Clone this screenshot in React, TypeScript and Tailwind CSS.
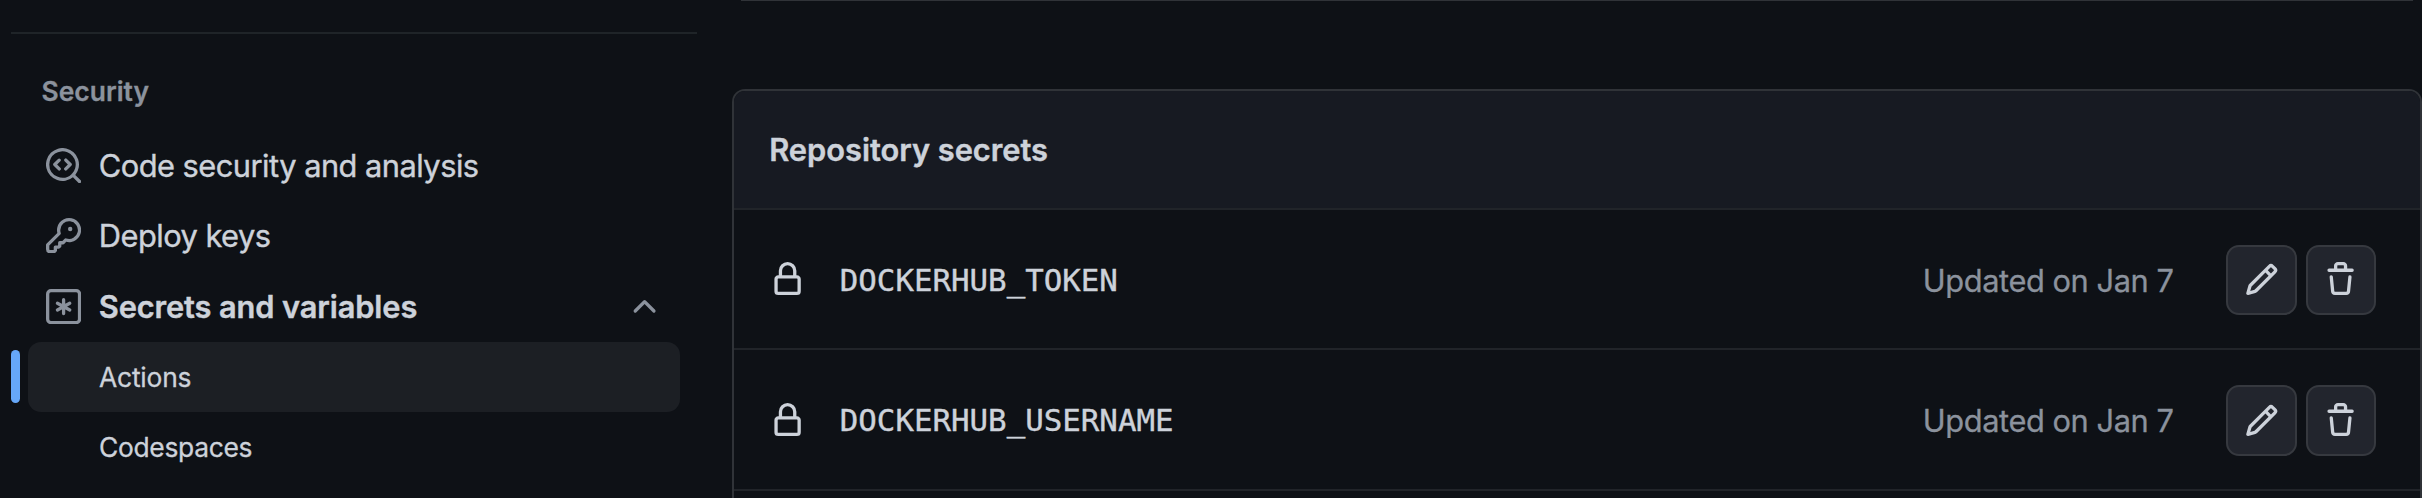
import type { ReactNode } from "react";

const PATHS = {
  codescan:
    "M8.47 4.97a.75.75 0 0 0 0 1.06L9.94 7.5 8.47 8.97a.75.75 0 1 0 1.06 1.06l2-2a.75.75 0 0 0 0-1.06l-2-2a.75.75 0 0 0-1.06 0ZM6.53 6.03a.75.75 0 0 0-1.06-1.06l-2 2a.75.75 0 0 0 0 1.06l2 2a.75.75 0 1 0 1.06-1.06L5.06 7.5l1.47-1.47ZM12.246 13.307a7.501 7.501 0 1 1 1.06-1.06l2.474 2.473a.749.749 0 1 1-1.06 1.06ZM1.5 7.5a6.002 6.002 0 0 0 3.608 5.504 6.002 6.002 0 0 0 6.486-1.117.748.748 0 0 1 .292-.293A6 6 0 1 0 1.5 7.5Z",
  key: "M10.5 0a5.499 5.499 0 1 1-1.288 10.848l-.932.932a.749.749 0 0 1-.53.22H7v.75a.749.749 0 0 1-.22.53l-.5.5a.749.749 0 0 1-.53.22H5v.75a.749.749 0 0 1-.22.53l-.5.5a.749.749 0 0 1-.53.22h-2A1.75 1.75 0 0 1 0 14.25v-2c0-.199.079-.389.22-.53l4.932-4.932A5.5 5.5 0 0 1 10.5 0Zm-4 5.5c-.001.431.069.86.205 1.269a.75.75 0 0 1-.181.768L1.5 12.56v1.69c0 .138.112.25.25.25h1.69l.06-.06v-1.19a.75.75 0 0 1 .75-.75h1.19l.06-.06v-1.19a.75.75 0 0 1 .75-.75h1.19l1.023-1.025a.75.75 0 0 1 .768-.18A4 4 0 1 0 6.5 5.5ZM11 6a1 1 0 1 1 0-2 1 1 0 0 1 0 2Z",
  lock: "M4 4a4 4 0 0 1 8 0v2h.25c.966 0 1.75.784 1.75 1.75v5.5A1.75 1.75 0 0 1 12.25 15h-8.5A1.75 1.75 0 0 1 2 13.25v-5.5C2 6.784 2.784 6 3.75 6H4Zm8.25 3.5h-8.5a.25.25 0 0 0-.25.25v5.5c0 .138.112.25.25.25h8.5a.25.25 0 0 0 .25-.25v-5.5a.25.25 0 0 0-.25-.25ZM10.5 6V4a2.5 2.5 0 1 0-5 0v2Z",
  chevronUp:
    "M3.22 10.53a.749.749 0 0 1 0-1.06l4.25-4.25a.749.749 0 0 1 1.06 0l4.25 4.25a.749.749 0 1 1-1.06 1.06L8 6.811 4.28 10.53a.749.749 0 0 1-1.06 0Z",
  pencil:
    "M11.013 1.427a1.75 1.75 0 0 1 2.474 0l1.086 1.086a1.75 1.75 0 0 1 0 2.474l-8.61 8.61c-.21.21-.47.364-.756.445l-3.251.93a.75.75 0 0 1-.927-.928l.929-3.25c.081-.286.235-.547.445-.758l8.61-8.61Zm.176 4.823L9.75 4.81l-6.286 6.287a.253.253 0 0 0-.064.108l-.558 1.953 1.953-.558a.253.253 0 0 0 .108-.064Zm1.238-3.763a.25.25 0 0 0-.354 0L10.811 3.75l1.439 1.44 1.263-1.263a.25.25 0 0 0 0-.354Z",
  trash:
    "M11 1.75V3h2.25a.75.75 0 0 1 0 1.5H2.75a.75.75 0 0 1 0-1.5H5V1.75C5 .784 5.784 0 6.75 0h2.5C10.216 0 11 .784 11 1.75ZM4.496 6.675l.66 6.6a.25.25 0 0 0 .249.225h5.19a.25.25 0 0 0 .249-.225l.66-6.6a.75.75 0 0 1 1.492.149l-.66 6.6A1.748 1.748 0 0 1 10.595 15h-5.19a1.75 1.75 0 0 1-1.741-1.575l-.66-6.6a.75.75 0 1 1 1.492-.15ZM6.5 1.75V3h3V1.75a.25.25 0 0 0-.25-.25h-2.5a.25.25 0 0 0-.25.25Z",
};

function Icon({ name }: { name: keyof typeof PATHS }) {
  return (
    <svg viewBox="0 0 16 16" fill="currentColor" aria-hidden="true" className="size-[35.2px] shrink-0">
      <path d={PATHS[name]} />
    </svg>
  );
}

function AsteriskIcon() {
  return (
    <svg viewBox="0 0 16 16" fill="none" stroke="currentColor" strokeWidth="1.5" strokeLinecap="round" aria-hidden="true" className="size-[35.2px] shrink-0">
      <rect x="0.75" y="0.75" width="14.5" height="14.5" rx="1.5" />
      <path d="M8 4.85v6.3M5.2 6.45l5.6 3.1M10.8 6.45l-5.6 3.1" />
    </svg>
  );
}

function NavItem({ icon, children, trailing }: { icon: ReactNode; children: ReactNode; trailing?: ReactNode }) {
  return (
    <a className="flex h-[70.4px] items-center pr-[17.6px] pl-[18px] text-[#8b929d]">
      {icon}
      <span className="ml-[17.6px] flex-1 pt-px whitespace-nowrap text-[#cdd2da]">{children}</span>
      {trailing}
    </a>
  );
}

function Sidebar() {
  return (
    <nav className="w-[697px] shrink-0 pt-8 pl-[11px]">
      <div className="h-0.5 bg-[#1f2428]" />
      <div className="mr-[17px] ml-[17px]">
        <h3 className="mt-[37px] mb-[19.3px] pl-[13.6px] text-[26.4px] leading-[40px] font-semibold text-[#8b929d] [-webkit-text-stroke:0.3px_currentColor]">
          Security
        </h3>
        <div className="text-[30.8px] [-webkit-text-stroke:0.4px_currentColor]">
          <NavItem icon={<Icon name="codescan" />}>
            <span className="tracking-[-0.52px]">Code security and analysis</span>
          </NavItem>
          <NavItem icon={<Icon name="key" />}>
            <span className="tracking-[-0.53px]">Deploy keys</span>
          </NavItem>
          <NavItem icon={<AsteriskIcon />} trailing={<Icon name="chevronUp" />}>
            <span className="font-semibold tracking-[-0.12px]">Secrets and variables</span>
          </NavItem>
        </div>
        <div className="mt-[0.5px] text-[26.4px] text-[#cdd2da] [-webkit-text-stroke:0.3px_currentColor]">
          <a className="relative flex h-[70px] items-center rounded-[13px] bg-[#1c1f24] pt-[2px] pl-[71px] tracking-[-0.2px]">
            <span className="absolute top-2 -left-[17px] h-[53px] w-[9px] rounded-full bg-[#66a7f8]" />
            Actions
          </a>
          <a className="flex h-[70px] items-center pt-[2px] pl-[71px] tracking-[-0.3px]">Codespaces</a>
        </div>
      </div>
    </nav>
  );
}

function IconButton({ name }: { name: "pencil" | "trash" }) {
  return (
    <button className="flex size-[70.4px] items-center justify-center rounded-[13px] border-2 border-[#36393f] bg-[#22252d] text-[#cdd2da]">
      <Icon name={name} />
    </button>
  );
}

function SecretRow({ name }: { name: string }) {
  return (
    <div className="flex h-[140.4px] items-center border-b-2 border-[#212429] pt-[1.5px] pr-[44px] pl-[36.2px] text-[#cdd2da]">
      <Icon name="lock" />
      <span className="ml-[34.4px] flex-1 font-['DejaVu_Sans_Mono',monospace] text-[30.8px] [-webkit-text-stroke:0.4px_currentColor]">
        {name}
      </span>
      <span className="mr-[52.6px] pt-[2px] text-[30.8px] tracking-[-0.43px] text-[#8b929d] [-webkit-text-stroke:0.3px_currentColor]">
        Updated on Jan 7
      </span>
      <div className="flex gap-[9px]">
        <IconButton name="pencil" />
        <IconButton name="trash" />
      </div>
    </div>
  );
}

export default function App() {
  return (
    <div className="flex h-[498px] w-[2422px] overflow-hidden bg-[#0e1116] font-['Inter',sans-serif]">
      <Sidebar />
      <main className="ml-[35px] flex-1">
        <div className="mx-[9px] h-px bg-[#303338]" />
        <section className="mt-[88px] h-[440px] overflow-hidden rounded-t-[13px] border-2 border-b-0 border-[#303338]">
          <header className="flex h-[119px] items-center border-b-2 border-[#212429] bg-[#171a22] pt-[2px] pl-[35.2px]">
            <h2 className="text-[30.8px] font-semibold tracking-[-0.02px] text-[#cdd2da] [-webkit-text-stroke:0.4px_currentColor]">
              Repository secrets
            </h2>
          </header>
          <SecretRow name="DOCKERHUB_TOKEN" />
          <SecretRow name="DOCKERHUB_USERNAME" />
        </section>
      </main>
    </div>
  );
}
